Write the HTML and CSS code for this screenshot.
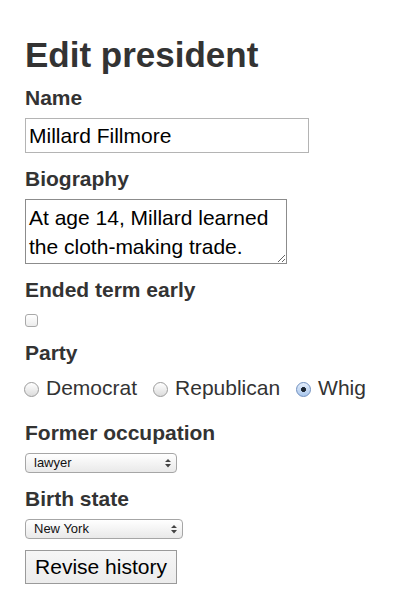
FILE: index.html
```html
<!DOCTYPE html>
<html>
<head>
<meta charset="utf-8">
<title>Edit president</title>
<link rel="stylesheet" href="styles.css">
</head>
<body>
<form class="form">
  <h1 class="title">Edit president</h1>

  <label class="label first" for="name">Name</label>
  <input class="text" id="name" type="text" value="Millard Fillmore">

  <label class="label" for="bio">Biography</label>
  <textarea class="area" id="bio">At age 14, Millard learned the cloth-making trade.</textarea>

  <label class="label" for="early">Ended term early</label>
  <input class="check" id="early" type="checkbox">

  <div class="label">Party</div>
  <div class="radios">
    <label class="opt"><input class="radio" type="radio" name="party">Democrat</label>
    <label class="opt"><input class="radio" type="radio" name="party">Republican</label>
    <label class="opt"><input class="radio" type="radio" name="party" checked>Whig</label>
  </div>

  <label class="label occ" for="occ">Former occupation</label>
  <span class="sel-wrap w152">
    <select class="sel" id="occ"><option>lawyer</option></select>
    <svg class="arrows" width="6" height="9" viewBox="0 0 6 9"><path d="M3 0 L6 3 L0 3 Z M0 5 L6 5 L3 8.5 Z" fill="#444"/></svg>
  </span>

  <label class="label" for="state">Birth state</label>
  <span class="sel-wrap w158">
    <select class="sel" id="state"><option>New York</option></select>
    <svg class="arrows" width="6" height="9" viewBox="0 0 6 9"><path d="M3 0 L6 3 L0 3 Z M0 5 L6 5 L3 8.5 Z" fill="#444"/></svg>
  </span>

  <button class="btn" type="button">Revise history</button>
</form>
</body>
</html>
```

FILE: styles.css
```css
html, body {
  margin: 0;
  padding: 0;
  background: #fff;
}

body {
  font-family: "Liberation Sans", Arial, Helvetica, sans-serif;
  color: #333;
}

.form {
  display: flex;
  flex-direction: column;
  align-items: flex-start;
  padding: 35px 0 0 25px;
}

.title {
  margin: 0 0 11px;
  font-size: 35px;
  line-height: 40px;
  font-weight: bold;
  color: #333;
}

.label {
  display: block;
  margin: 14px 0 8px;
  font-size: 21px;
  line-height: 24px;
  font-weight: bold;
  color: #333;
}

.label.first {
  margin-top: 0;
}

.text {
  box-sizing: border-box;
  width: 284px;
  height: 35px;
  margin: 0;
  padding: 0 3px;
  border: 1px solid #b4b4b4;
  font-family: "Liberation Sans", Arial, sans-serif;
  font-size: 21px;
  color: #000;
  outline: none;
}

.area {
  box-sizing: border-box;
  display: block;
  width: 262px;
  height: 65px;
  margin: 0;
  padding: 3px 3px;
  border: 1px solid #8c8c8c;
  font-family: "Liberation Sans", Arial, sans-serif;
  font-size: 21px;
  line-height: 29px;
  color: #000;
  overflow: hidden;
  outline: none;
}

.check {
  appearance: none;
  -webkit-appearance: none;
  box-sizing: border-box;
  width: 13px;
  height: 13px;
  margin: 4px 0 0;
  border: 1px solid #a9a9a9;
  border-radius: 3px;
  background: linear-gradient(#ffffff, #ececec);
}

.radios {
  display: flex;
  align-items: center;
  gap: 16px;
  margin: 3px 0 6px -1px;
  font-size: 21px;
  line-height: 24px;
  color: #333;
}

.opt {
  display: flex;
  align-items: center;
}

.radio {
  appearance: none;
  -webkit-appearance: none;
  box-sizing: border-box;
  width: 15px;
  height: 15px;
  margin: 2px 7px 0 0;
  border: 1px solid #9c9c9c;
  border-radius: 50%;
  background: linear-gradient(#ffffff, #dcdcdc);
  position: relative;
}

.radio:checked {
  border-color: #6f8fbf;
  background: radial-gradient(circle at 50% 50%, #1c2633 0 2.2px, transparent 2.7px),
              linear-gradient(#e4eefb, #a9c6ec);
}

.label.occ {
  margin-top: 15px;
}

.sel-wrap {
  position: relative;
  display: block;
  height: 20px;
}

.w152 { width: 152px; }
.w158 { width: 158px; }

.sel {
  appearance: none;
  -webkit-appearance: none;
  box-sizing: border-box;
  width: 100%;
  height: 20px;
  margin: 0;
  padding: 0 0 0 8px;
  border: 1px solid #a6a6a6;
  border-radius: 4px;
  background: linear-gradient(#ffffff, #e9e9e9);
  font-family: "Liberation Sans", Arial, sans-serif;
  font-size: 13px;
  line-height: 18px;
  color: #111;
  outline: none;
}

.arrows {
  position: absolute;
  right: 6px;
  top: 6px;
  pointer-events: none;
}

.btn {
  box-sizing: border-box;
  width: 152px;
  height: 34px;
  margin: 11px 0 0;
  padding: 0;
  border: 1px solid #9a9a9a;
  background: linear-gradient(#f6f6f6, #ececec);
  font-family: "Liberation Sans", Arial, sans-serif;
  font-size: 21px;
  color: #000;
}
```
